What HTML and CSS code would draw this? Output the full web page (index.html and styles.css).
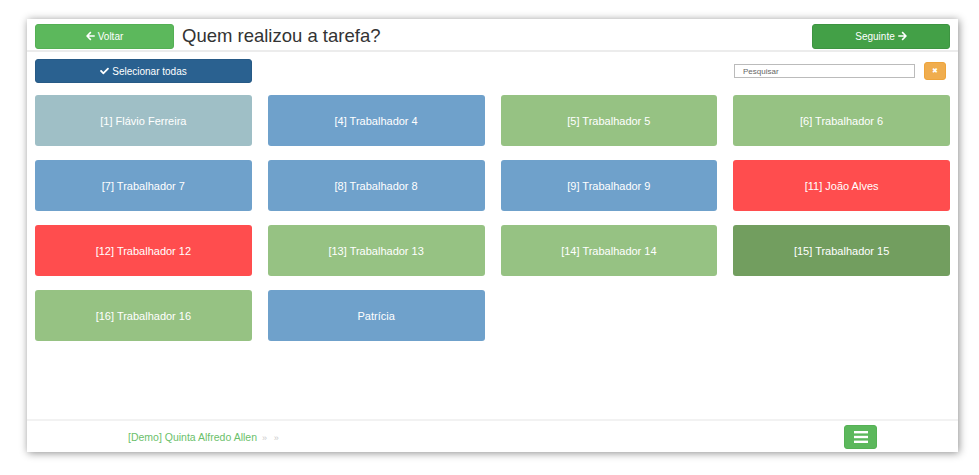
FILE: index.html
```html
<!DOCTYPE html>
<html lang="pt">
<head>
    <meta charset="UTF-8">
    <meta name="viewport" content="width=device-width, initial-scale=1.0">
    <title>Quem realizou a tarefa?</title>
    <link rel="stylesheet" href="styles.css">
</head>
<body>

    <div class="panel">
        <div class="header">
            <button class="btn btn-back">
                <svg class="ico" viewBox="0 0 448 512"><path d="M257.5 445.1l-22.2 22.2c-9.4 9.4-24.6 9.4-33.9 0L7 273c-9.4-9.4-9.4-24.6 0-33.9L201.4 44.7c9.4-9.4 24.6-9.4 33.9 0l22.2 22.2c9.5 9.5 9.3 25-.4 34.3L136.6 216H424c13.3 0 24 10.7 24 24v32c0 13.3-10.7 24-24 24H136.6l120.5 114.8c9.8 9.3 10 24.8.4 34.3z"/></svg>
                Voltar
            </button>
            <h1 class="title">Quem realizou a tarefa?</h1>
            <button class="btn btn-next">
                Seguinte
                <svg class="ico" viewBox="0 0 448 512"><path d="M190.5 66.9l22.2-22.2c9.4-9.4 24.6-9.4 33.9 0L441 239c9.4 9.4 9.4 24.6 0 33.9L246.6 467.3c-9.4 9.4-24.6 9.4-33.9 0l-22.2-22.2c-9.5-9.5-9.3-25 .4-34.3L311.4 296H24c-13.3 0-24-10.7-24-24v-32c0-13.3 10.7-24 24-24h287.4L190.9 101.2c-9.8-9.3-10-24.8-.4-34.3z"/></svg>
            </button>
        </div>

        <div class="main">
            <div class="toolbar">
                <button class="btn btn-all">
                    <svg class="ico" viewBox="0 0 512 512"><path d="M173.9 439.4L7.5 273c-10-10-10-26.2 0-36.2l36.2-36.2c10-10 26.2-10 36.2 0L192 312.7 432.1 72.6c10-10 26.2-10 36.2 0l36.2 36.2c10 10 10 26.2 0 36.2L210.1 439.4c-10 10-26.2 10-36.2 0z"/></svg>
                    Selecionar todas
                </button>
                <div class="search">
                    <input type="text" placeholder="Pesquisar">
                    <button class="btn btn-clear">&#x2716;</button>
                </div>
            </div>

            <div class="grid">
                <div class="card gray">[1] Flávio Ferreira</div>
                <div class="card blue">[4] Trabalhador 4</div>
                <div class="card green">[5] Trabalhador 5</div>
                <div class="card green">[6] Trabalhador 6</div>
                <div class="card blue">[7] Trabalhador 7</div>
                <div class="card blue">[8] Trabalhador 8</div>
                <div class="card blue">[9] Trabalhador 9</div>
                <div class="card red">[11] João Alves</div>
                <div class="card red">[12] Trabalhador 12</div>
                <div class="card green">[13] Trabalhador 13</div>
                <div class="card green">[14] Trabalhador 14</div>
                <div class="card dark">[15] Trabalhador 15</div>
                <div class="card green">[16] Trabalhador 16</div>
                <div class="card blue">Patrícia</div>
            </div>
        </div>

        <div class="footer">
            <div class="crumbs">[Demo] Quinta Alfredo Allen <span class="sep">»</span> <span class="sep">»</span></div>
            <button class="btn btn-menu">
                <svg viewBox="0 0 14 12" width="14" height="12"><rect x="0" y="0" width="14" height="2.4"/><rect x="0" y="4.8" width="14" height="2.4"/><rect x="0" y="9.6" width="14" height="2.4"/></svg>
            </button>
        </div>
    </div>

</body>
</html>
```

FILE: styles.css
```css
body {
    margin: 0;
    min-height: 475px;
    background: #fff;
    font-family: "Liberation Sans", Arial, sans-serif;
    color: #333;
}
.panel {
    margin: 19px 0 0 27px;
    width: 931px;
    height: 433px;
    background: #fff;
    box-shadow: 1px 1px 8px rgba(0, 0, 0, 0.45);
    display: flex;
    flex-direction: column;
}
.header {
    display: flex;
    align-items: center;
    padding: 3px 8px 0 8px;
    height: 28px;
    border-bottom: 2px solid #ececec;
}
.btn {
    border: 1px solid transparent;
    border-radius: 3px;
    color: #fff;
    font-family: inherit;
    font-size: 10px;
    cursor: pointer;
    display: flex;
    align-items: center;
    justify-content: center;
    gap: 3px;
    padding: 0;
}
.ico {
    width: 9px;
    height: 10px;
    fill: #fff;
}
.btn-back {
    width: 139px;
    height: 25px;
    background: #5cb85c;
    border-color: #54b054;
}
.btn-next {
    width: 138px;
    height: 25px;
    margin-left: auto;
    background: #43a047;
    border-color: #3d9441;
}
.title {
    margin: 0 0 0 8px;
    font-size: 18.5px;
    font-weight: normal;
    color: #333;
}
.main {
    flex: 1;
    padding: 7px 8px 0 8px;
}
.toolbar {
    display: flex;
    justify-content: space-between;
    align-items: center;
    height: 24px;
}
.btn-all {
    width: 217px;
    height: 24px;
    background: #2a6190;
    border-color: #275a86;
}
.search {
    display: flex;
    align-items: center;
    gap: 9px;
    padding-right: 4px;
}
.search input {
    width: 181px;
    height: 14px;
    box-sizing: border-box;
    border: 1px solid #bbb;
    padding: 0 8px;
    font-family: inherit;
    font-size: 8px;
    color: #555;
}
.search input::placeholder {
    color: #666;
}
.btn-clear {
    width: 22px;
    height: 18px;
    background: #f0ad4e;
    border-color: #eea43b;
    font-size: 7px;
}
.grid {
    display: grid;
    grid-template-columns: repeat(4, 1fr);
    column-gap: 16px;
    row-gap: 14px;
    margin-top: 12px;
}
.card {
    height: 51px;
    border-radius: 3px;
    color: #fff;
    font-size: 11px;
    display: flex;
    align-items: center;
    justify-content: center;
}
.gray {
    background: #9fbfc6;
}
.blue {
    background: #6fa1cb;
}
.green {
    background: #96c283;
}
.red {
    background: #ff4d4e;
}
.dark {
    background: #729e5f;
}
.footer {
    height: 31px;
    border-top: 2px solid #f2f2f2;
    display: flex;
    align-items: center;
    justify-content: space-between;
    padding: 0 81px 0 101px;
}
.crumbs {
    font-size: 10.5px;
    color: #6bbf6b;
}
.sep {
    color: #ccc;
    font-size: 9px;
    margin: 0 2px;
}
.btn-menu {
    width: 33px;
    height: 24px;
    background: #5cb85c;
    border-color: #55b155;
}
.btn-menu svg {
    fill: #fff;
}
```
